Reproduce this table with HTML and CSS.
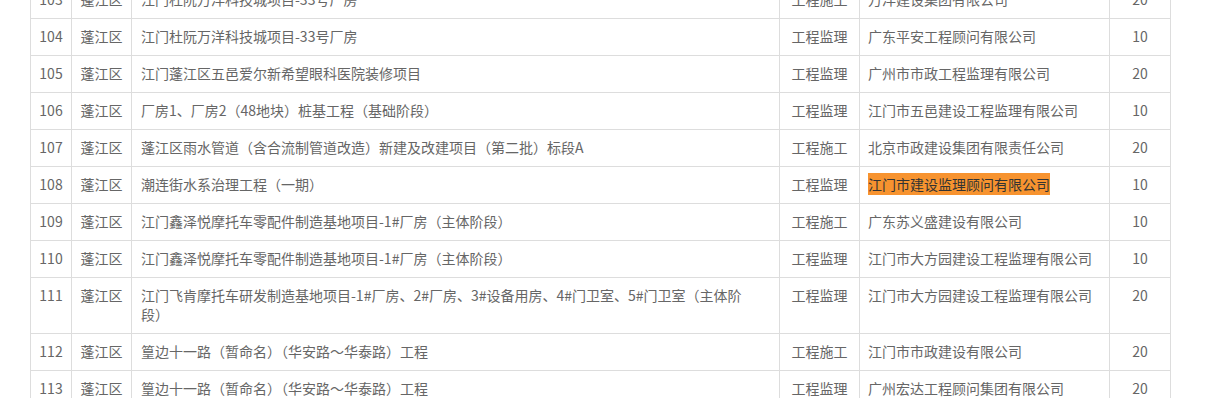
FILE: index.html
```html
<!DOCTYPE html>
<html lang="zh-CN">
<head>
<meta charset="utf-8">
<title>项目列表</title>
<link rel="stylesheet" href="styles.css">
</head>
<body>
<div class="page">
  <table class="list">
    <colgroup>
      <col class="c-no"><col class="c-area"><col class="c-name"><col class="c-type"><col class="c-co"><col class="c-score">
    </colgroup>
    <tbody>
      <tr><td class="ctr">103</td><td class="ctr">蓬江区</td><td class="name">江门杜阮万洋科技城项目-33号厂房</td><td class="ctr">工程施工</td><td class="co">万洋建设集团有限公司</td><td class="ctr">20</td></tr>
      <tr><td class="ctr">104</td><td class="ctr">蓬江区</td><td class="name">江门杜阮万洋科技城项目-33号厂房</td><td class="ctr">工程监理</td><td class="co">广东平安工程顾问有限公司</td><td class="ctr">10</td></tr>
      <tr><td class="ctr">105</td><td class="ctr">蓬江区</td><td class="name">江门蓬江区五邑爱尔新希望眼科医院装修项目</td><td class="ctr">工程监理</td><td class="co">广州市市政工程监理有限公司</td><td class="ctr">20</td></tr>
      <tr><td class="ctr">106</td><td class="ctr">蓬江区</td><td class="name">厂房1、厂房2（48地块）桩基工程（基础阶段）</td><td class="ctr">工程监理</td><td class="co">江门市五邑建设工程监理有限公司</td><td class="ctr">10</td></tr>
      <tr><td class="ctr">107</td><td class="ctr">蓬江区</td><td class="name">蓬江区雨水管道（含合流制管道改造）新建及改建项目（第二批）标段A</td><td class="ctr">工程施工</td><td class="co">北京市政建设集团有限责任公司</td><td class="ctr">20</td></tr>
      <tr><td class="ctr">108</td><td class="ctr">蓬江区</td><td class="name">潮连街水系治理工程（一期）</td><td class="ctr">工程监理</td><td class="co"><span class="hl">江门市建设监理顾问有限公司</span></td><td class="ctr">10</td></tr>
      <tr><td class="ctr">109</td><td class="ctr">蓬江区</td><td class="name">江门鑫泽悦摩托车零配件制造基地项目-1#厂房（主体阶段）</td><td class="ctr">工程施工</td><td class="co">广东苏义盛建设有限公司</td><td class="ctr">10</td></tr>
      <tr><td class="ctr">110</td><td class="ctr">蓬江区</td><td class="name">江门鑫泽悦摩托车零配件制造基地项目-1#厂房（主体阶段）</td><td class="ctr">工程监理</td><td class="co">江门市大方园建设工程监理有限公司</td><td class="ctr">10</td></tr>
      <tr><td class="ctr">111</td><td class="ctr">蓬江区</td><td class="name">江门飞肯摩托车研发制造基地项目-1#厂房、2#厂房、3#设备用房、4#门卫室、5#门卫室（主体阶<br>段）</td><td class="ctr">工程监理</td><td class="co">江门市大方园建设工程监理有限公司</td><td class="ctr">20</td></tr>
      <tr><td class="ctr">112</td><td class="ctr">蓬江区</td><td class="name">篁边十一路（暂命名）（华安路～华泰路）工程</td><td class="ctr">工程施工</td><td class="co">江门市市政建设有限公司</td><td class="ctr">20</td></tr>
      <tr><td class="ctr">113</td><td class="ctr">蓬江区</td><td class="name">篁边十一路（暂命名）（华安路～华泰路）工程</td><td class="ctr">工程监理</td><td class="co">广州宏达工程顾问集团有限公司</td><td class="ctr">20</td></tr>
    </tbody>
  </table>
</div>
</body>
</html>
```

FILE: styles.css
```css
html, body {
  margin: 0;
  padding: 0;
  background: #fff;
  overflow: hidden;
}

.page {
  padding-left: 30px;
  margin-top: -19px;
}

.list {
  border-collapse: collapse;
  table-layout: fixed;
  width: 1140px;
  font-family: "Microsoft YaHei", "Noto Sans CJK SC", "Noto Sans", sans-serif;
  font-size: 14px;
  color: #666;
}

.c-no { width: 41px; }
.c-area { width: 60px; }
.c-name { width: 648px; }
.c-type { width: 80px; }
.c-co { width: 250px; }
.c-score { width: 61px; }

.list td {
  border: 1px solid #ddd;
  line-height: 19px;
  padding: 8px 8px 9px;
  vertical-align: top;
}

.list td.ctr {
  text-align: center;
  padding-left: 2px;
  padding-right: 2px;
}

.list td.name {
  padding-left: 9px;
  padding-right: 10px;
}

.list td.co {
  padding-left: 8px;
}

.hl {
  background: #f7932f;
  color: #333;
  padding: 1px 0;
}
```
